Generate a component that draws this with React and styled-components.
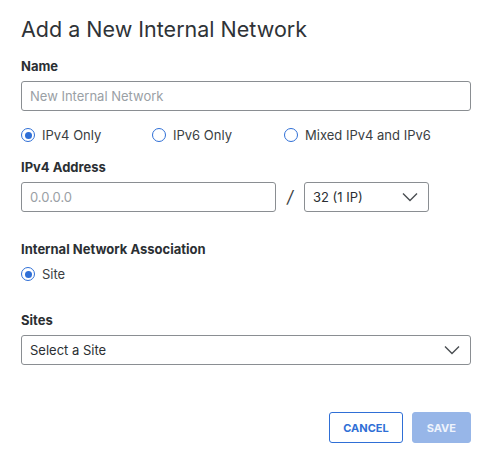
import styled, { createGlobalStyle } from "styled-components"

const GlobalStyle = createGlobalStyle`
	body {
		margin: 0;
		background: #ffffff;
		font-family: Inter, "Noto Sans", sans-serif;
		color: #2b2f33;
	}
`

const Dialog = styled.form`
	width: 492px;
	box-sizing: border-box;
	padding: 14px 21px 0 21px;
	display: flex;
	flex-direction: column;
`

const Title = styled.h1`
	margin: 0;
	font-size: 21.5px;
	font-weight: 400;
	line-height: 30px;
	color: #2f3337;
`

const Label = styled.div`
	font-size: 13px;
	font-weight: 700;
	line-height: 16px;
	color: #2b2f33;
	margin-top: ${({ $top }) => $top}px;
	margin-bottom: 7px;
`

const TextInput = styled.input`
	box-sizing: border-box;
	height: 30px;
	width: ${({ $width }) => $width || "100%"};
	border: 1px solid #8a8e92;
	border-radius: 3px;
	padding: 0 8px;
	font-family: inherit;
	font-size: 13px;
	color: #2b2f33;
	outline: none;
	&::placeholder {
		color: #9aa0a5;
	}
`

const RadioRow = styled.div`
	display: flex;
	margin-top: ${({ $top }) => $top}px;
	height: 18px;
	align-items: center;
`

const RadioOption = styled.label`
	display: flex;
	align-items: center;
	gap: 7px;
	width: ${({ $width }) => ($width ? `${$width}px` : "auto")};
	font-size: 13px;
	color: #3a3e42;
`

const RadioCircle = styled.span`
	box-sizing: border-box;
	width: 14px;
	height: 14px;
	border-radius: 50%;
	border: 1.5px solid #2f6fd6;
	display: flex;
	align-items: center;
	justify-content: center;
	&::after {
		content: "";
		width: 7px;
		height: 7px;
		border-radius: 50%;
		background: #2f6fd6;
		display: ${({ $checked }) => ($checked ? "block" : "none")};
	}
`

const AddressRow = styled.div`
	display: flex;
	align-items: center;
`

const Slash = styled.span`
	width: 28px;
	text-align: center;
	font-size: 17px;
	color: #3a3e42;
	font-style: italic;
`

const SelectBox = styled.div`
	box-sizing: border-box;
	height: 30px;
	width: ${({ $width }) => $width || "100%"};
	border: 1px solid #8a8e92;
	border-radius: 3px;
	padding: 0 10px 0 8px;
	display: flex;
	align-items: center;
	justify-content: space-between;
	font-size: 13px;
	color: #2b2f33;
`

const Footer = styled.div`
	display: flex;
	justify-content: flex-end;
	gap: 9px;
	margin-top: 47px;
`

const Button = styled.button`
	box-sizing: border-box;
	height: 31px;
	padding: 0 ${({ $pad }) => $pad}px;
	border-radius: 3px;
	font-family: inherit;
	font-size: 11px;
	font-weight: 700;
	border: 1px solid ${({ $primary }) => ($primary ? "#97b6e8" : "#2f6fd6")};
	background: ${({ $primary }) => ($primary ? "#97b6e8" : "#ffffff")};
	color: ${({ $primary }) => ($primary ? "#eef3fc" : "#2f6fd6")};
`

const Chevron = () => (
	<svg width="16" height="10" viewBox="0 0 16 10" fill="none">
		<path d="M1 1.5l7 7 7-7" stroke="#4a4e52" strokeWidth="1.4" />
	</svg>
)

const Radio = ({ checked, label, width }) => (
	<RadioOption $width={width}>
		<RadioCircle $checked={checked} />
		{label}
	</RadioOption>
)

export default function App() {
	return (
		<>
			<GlobalStyle />
			<Dialog>
				<Title>Add a New Internal Network</Title>
				<Label $top={14}>Name</Label>
				<TextInput placeholder="New Internal Network" />
				<RadioRow $top={15}>
					<Radio checked label="IPv4 Only" width={131} />
					<Radio label="IPv6 Only" width={132} />
					<Radio label="Mixed IPv4 and IPv6" />
				</RadioRow>
				<Label $top={15}>IPv4 Address</Label>
				<AddressRow>
					<TextInput placeholder="0.0.0.0" $width="255px" />
					<Slash>/</Slash>
					<SelectBox $width="125px">
						32 (1 IP)
						<Chevron />
					</SelectBox>
				</AddressRow>
				<Label $top={29}>Internal Network Association</Label>
				<RadioRow $top={1}>
					<Radio checked label="Site" />
				</RadioRow>
				<Label $top={29}>Sites</Label>
				<SelectBox>
					Select a Site
					<Chevron />
				</SelectBox>
				<Footer>
					<Button type="button" $pad={13}>CANCEL</Button>
					<Button type="button" $primary $pad={14}>SAVE</Button>
				</Footer>
			</Dialog>
		</>
	)
}
